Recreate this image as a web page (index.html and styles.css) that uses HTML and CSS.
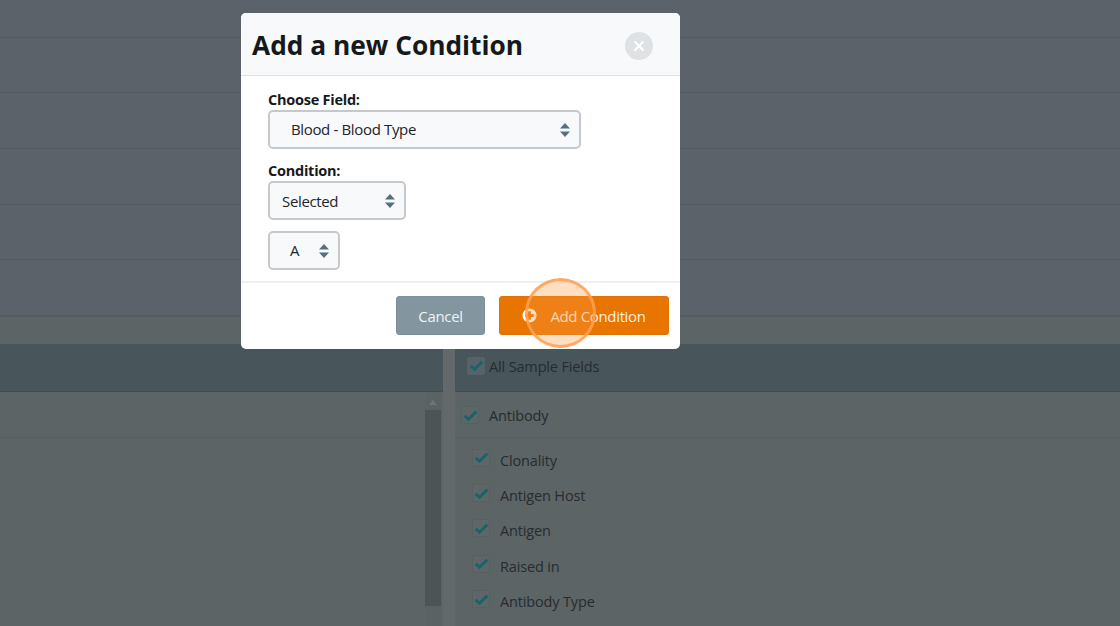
FILE: index.html
```html
<!DOCTYPE html>
<html lang="en">
<head>
<meta charset="utf-8">
<title>Add a new Condition</title>
<link rel="stylesheet" href="styles.css">
</head>
<body>
<svg class="defs" width="0" height="0" aria-hidden="true">
  <symbol id="updown" viewBox="0 0 10 14"><path d="M5 0 L10 5.6 H0 Z M0 8.4 H10 L5 14 Z"/></symbol>
  <symbol id="tick" viewBox="0 0 14 11"><path d="M1.2 5.8 L5 9.2 L12.8 1.6" fill="none" stroke-width="3"/></symbol>
</svg>
<div class="page">
  <div class="rows">
    <div class="row first"></div>
    <div class="row"></div>
    <div class="row"></div>
    <div class="row"></div>
    <div class="row"></div>
    <div class="row"></div>
  </div>
  <div class="band"></div>
  <div class="columns">
    <div class="left">
      <div class="panel-head"></div>
      <div class="left-body">
        <div class="left-list"><div class="left-line"></div></div>
        <div class="scrollbar">
          <div class="scroll-arrow"></div>
          <div class="scroll-thumb"></div>
        </div>
      </div>
    </div>
    <div class="divider"></div>
    <div class="right">
      <div class="panel-head head-fields">
        <span class="check"><svg class="tick"><use href="#tick"/></svg></span>
        <span class="field-text">All Sample Fields</span>
      </div>
      <div class="group">
        <span class="check"><svg class="tick"><use href="#tick"/></svg></span>
        <span class="field-text">Antibody</span>
      </div>
      <ul class="fields">
        <li class="field"><span class="check"><svg class="tick"><use href="#tick"/></svg></span><span class="field-text">Clonality</span></li>
        <li class="field"><span class="check"><svg class="tick"><use href="#tick"/></svg></span><span class="field-text">Antigen Host</span></li>
        <li class="field"><span class="check"><svg class="tick"><use href="#tick"/></svg></span><span class="field-text">Antigen</span></li>
        <li class="field"><span class="check"><svg class="tick"><use href="#tick"/></svg></span><span class="field-text">Raised in</span></li>
        <li class="field"><span class="check"><svg class="tick"><use href="#tick"/></svg></span><span class="field-text">Antibody Type</span></li>
      </ul>
    </div>
  </div>

  <div class="modal">
    <div class="modal-head">
      <h1 class="modal-title">Add a new Condition</h1>
      <span class="close">
        <svg viewBox="0 0 12 12" class="close-x"><path d="M1.5 1.5 L10.5 10.5 M10.5 1.5 L1.5 10.5"/></svg>
      </span>
    </div>
    <div class="modal-body">
      <div class="label">Choose Field:</div>
      <div class="select select-field"><span class="select-text">Blood - Blood Type</span><svg class="updown"><use href="#updown"/></svg></div>
      <div class="label label-cond">Condition:</div>
      <div class="select select-cond"><span>Selected</span><svg class="updown"><use href="#updown"/></svg></div>
      <div class="select select-val"><span class="select-text">A</span><svg class="updown"><use href="#updown"/></svg></div>
    </div>
    <div class="modal-foot">
      <button class="btn btn-cancel">Cancel</button>
      <button class="btn btn-add">
        <svg class="plus" viewBox="0 0 16 16"><path fill-rule="evenodd" d="M8 .5a7.5 7.5 0 1 0 0 15 7.5 7.5 0 0 0 0-15zM6.5 3.500h3v3h3v3h-3v3h-3v-3h-3v-3h3z"/></svg>
        <span>Add Condition</span>
      </button>
    </div>
  </div>
  <div class="spotlight"></div>
</div>
</body>
</html>
```
FILE: styles.css
```css
* { box-sizing: border-box; }
html, body { margin: 0; padding: 0; }
body { font-family: "Open Sans", "Noto Sans", sans-serif; color: #212529; background: #5b6267; }
.defs { position: absolute; }
.page { position: relative; width: 1120px; height: 626px; overflow: hidden; background: #5c6465; }

.rows { background: #5b6269; }
.row { height: 55.6px; border-bottom: 1px solid #545b62; }
.row.first { height: 37.8px; }
.band { height: 27.6px; border-top: 1px solid #565d62; background: #5c6465; }

.columns { display: flex; height: 283px; border-top: 1px solid #59636a; }
.left { width: 443px; flex: none; }
.divider { width: 12px; flex: none; background: #63696b; }
.right { flex: 1; }
.panel-head { height: 47.6px; background: #48555b; border-bottom: 1px solid #424d52; }
.left-body { display: flex; height: 235px; }
.left-list { flex: 1; }
.left-line { height: 46px; border-bottom: 1px solid #565e5f; }
.scrollbar { width: 16px; margin-right: 2px; display: flex; flex-direction: column; align-items: center; background: #5a6263; }
.scroll-arrow { margin-top: 8px; width: 0; height: 0; border-left: 4.5px solid transparent; border-right: 4.5px solid transparent; border-bottom: 5px solid #6e7678; }
.scroll-thumb { margin-top: 5px; width: 16px; height: 196px; background: #4c5455; }

.head-fields { display: flex; align-items: center; padding-left: 12px; gap: 4px; }
.group { display: flex; align-items: center; height: 46px; padding: 6px 0 0 6px; gap: 10px; border-bottom: 1px solid #566061; }
.fields { list-style: none; margin: 0; padding: 4px 0 0 17px; }
.field { display: flex; align-items: center; height: 35.4px; gap: 10px; }
.field .field-text { top: 1px; }
.check { width: 18px; height: 18px; flex: none; border: 1px solid #566162; border-radius: 2px; background: #5d6768; display: flex; align-items: center; justify-content: center; position: relative; top: -2px; }
.head-fields .check { background: #56646a; border-color: #53626a; }
.tick { width: 15px; height: 11px; stroke: #1a6469; fill: none; }
.field-text { font-size: 14.5px; letter-spacing: -0.15px; color: #262c30; line-height: 20px; position: relative; top: -1px; }

.modal { position: absolute; left: 241px; top: 13px; width: 439px; height: 336px; background: #fff; border-radius: 5px; overflow: hidden; display: flex; flex-direction: column; }
.modal-head { height: 63px; flex: none; display: flex; align-items: center; justify-content: space-between; padding: 0 27px 0 11px; background: #f8f9fa; border-bottom: 1px solid #dee2e6; }
.modal-title { margin: 2px 0 0; font-size: 26.3px; font-weight: 700; color: #16191c; line-height: 40px; }
.close { width: 28px; height: 28px; margin-top: 4px; border-radius: 50%; background: #dee2e4; display: flex; align-items: center; justify-content: center; }
.close-x { width: 12px; height: 12px; stroke: #fff; stroke-width: 2.2; fill: none; }
.modal-body { flex: 1; padding: 13px 27px 0; }
.label { font-size: 14.5px; font-weight: 700; letter-spacing: -0.25px; color: #16191c; line-height: 22px; height: 21px; }
.label-cond { margin-top: 11px; }
.select { height: 39px; display: flex; align-items: center; justify-content: space-between; background: #f8f9fa; border: 2px solid #c6c9cc; border-radius: 5px; font-size: 15px; letter-spacing: -0.35px; color: #212529; }
.select-text { margin-top: -2px; }
.select-field { width: 313px; padding: 0 9px 0 21px; }
.select-cond { width: 138px; padding: 0 9px 0 12px; }
.select-val { width: 72px; margin-top: 11px; padding: 0 9px 0 20px; }
.updown { width: 10px; height: 14px; fill: #55707e; flex: none; }
.modal-foot { height: 68px; flex: none; display: flex; justify-content: flex-end; gap: 14px; padding: 13px 11px 0 0; border-top: 2px solid #eeeff0; }
.btn { height: 39px; border: 1px solid transparent; border-radius: 3px; color: rgba(255, 255, 255, 0.9); font-family: inherit; font-size: 15px; letter-spacing: -0.35px; display: flex; align-items: center; justify-content: center; padding: 0; }
.btn-cancel { width: 89px; background: #83969f; border-color: #7d909a; }
.btn-add { width: 170px; background: #e87500; border-color: #de7204; gap: 13px; }
.plus { width: 15px; height: 15px; fill: #fff; }
.spotlight { position: absolute; left: 525px; top: 278px; width: 71px; height: 70px; border-radius: 50%; background: rgba(255, 153, 64, 0.32); border: 3px solid rgba(255, 160, 80, 0.85); }
```
